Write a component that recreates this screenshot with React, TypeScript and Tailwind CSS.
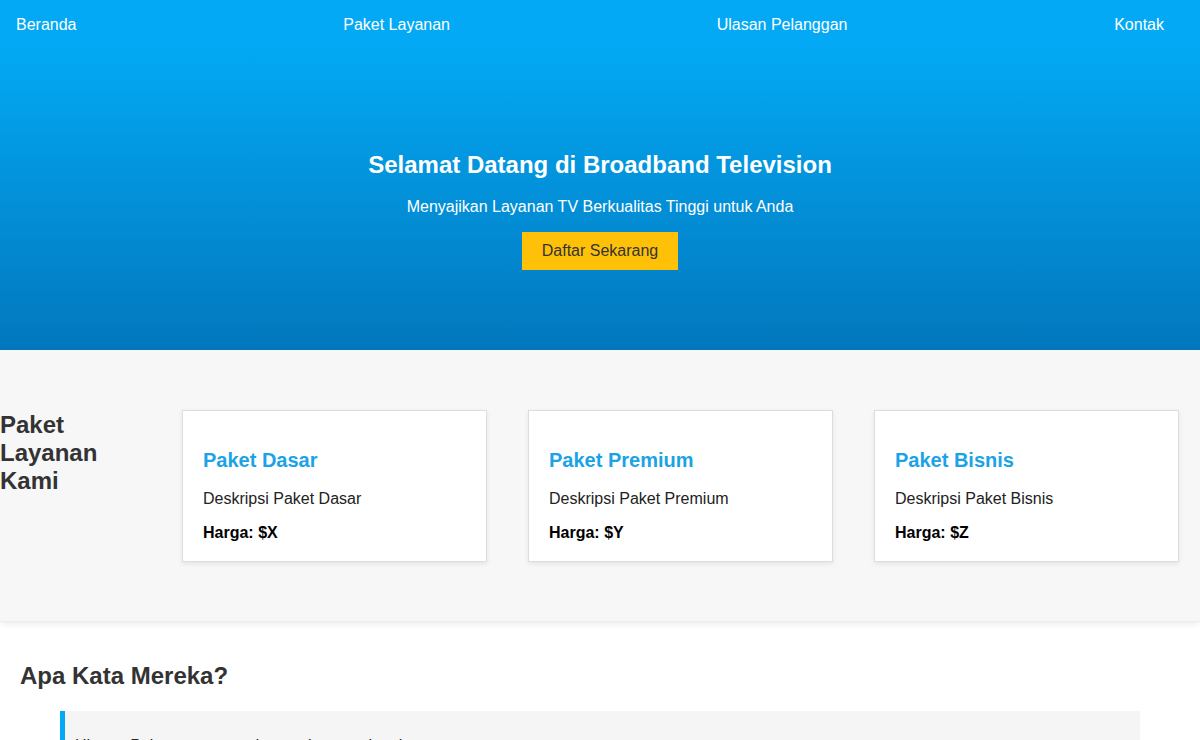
// Broadband Television landing page: nav, hero, paket cards, testimoni.

const NAV = ['Beranda', 'Paket Layanan', 'Ulasan Pelanggan', 'Kontak'];

const PAKET = [
  { name: 'Paket Dasar', desc: 'Deskripsi Paket Dasar', price: '$X' },
  { name: 'Paket Premium', desc: 'Deskripsi Paket Premium', price: '$Y' },
  { name: 'Paket Bisnis', desc: 'Deskripsi Paket Bisnis', price: '$Z' },
];

export default function App() {
  return (
    <div className="min-h-screen bg-white font-['Liberation_Sans',Arial,sans-serif] text-[#222]">
      <header className="bg-[linear-gradient(180deg,#03a9f4_0px,#03a9f4_48px,#0277bd_350px)] text-white">
        <nav className="flex h-12 items-center justify-between pl-4 pr-9 pt-[2px] text-base">
          {NAV.map(item => (
            <a key={item} href="#" className="text-white">{item}</a>
          ))}
        </nav>
        <div className="flex h-[302px] flex-col items-center pt-[103px] text-center">
          <h1 className="text-2xl font-bold leading-7">Selamat Datang di Broadband Television</h1>
          <p className="mt-[19px] text-base leading-[18px]">Menyajikan Layanan TV Berkualitas Tinggi untuk Anda</p>
          <button
            type="button"
            className="mt-[16px] bg-[#ffc107] px-5 py-[10px] text-base leading-[18px] text-[#333]"
          >
            Daftar Sekarang
          </button>
        </div>
      </header>

      <section className="flex h-[272px] items-start border-b border-[#ececec] bg-[#f7f7f7] pt-[60px] shadow-[0_2px_6px_rgba(0,0,0,0.08)]">
        <h2 className="mr-10 w-[142px] pt-[1px] text-2xl font-bold leading-7 text-[#333]">Paket Layanan Kami</h2>
        <div className="flex gap-[41px]">
          {PAKET.map(p => (
            <div
              key={p.name}
              className="h-[152px] w-[305px] border border-[#ddd] bg-white px-5 pt-[38px] shadow-[0_2px_5px_rgba(0,0,0,0.08)]"
            >
              <h3 className="text-xl font-bold leading-[23px] text-[#1ba3e6]">{p.name}</h3>
              <p className="mt-[18px] text-base leading-[18px]">{p.desc}</p>
              <p className="mt-4 text-base font-bold leading-[18px] text-black">Harga: {p.price}</p>
            </div>
          ))}
        </div>
      </section>

      <section className="px-5 pt-10">
        <h2 className="text-2xl font-bold leading-7 text-[#333]">Apa Kata Mereka?</h2>
        <blockquote className="mx-10 mt-[21px] border-l-[5px] border-[#03a9f4] bg-[#f5f5f5] px-[10px] pt-5 pb-5">
          <p className="pt-[6px] text-base leading-[18px]">Hingga Pelanggan puas dengan layanan kami.</p>
          <p className="mt-3 text-sm italic text-[#555]">- Pelanggan Setia</p>
        </blockquote>
      </section>
    </div>
  );
}
